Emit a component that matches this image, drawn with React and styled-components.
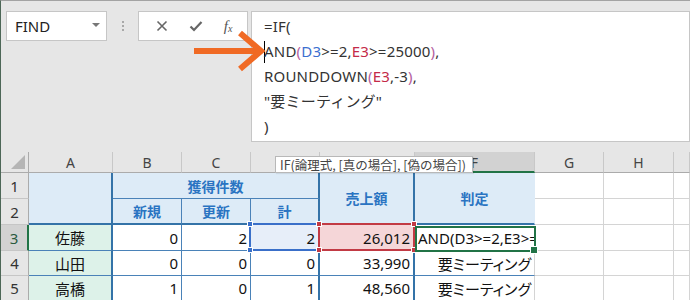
import React from "react";
import styled, { createGlobalStyle } from "styled-components";

const FONT = `"Noto Sans", "Noto Sans CJK JP", sans-serif`;
const JP = `"Noto Sans CJK JP", "Noto Sans", sans-serif`;
const BLUE = "#3473a8";
const THIN = "#4a82b8";
const GRID = "#d4d4d4";

const Global = createGlobalStyle`
  html, body { margin: 0; padding: 0; overflow: hidden; background: #e6e6e6; }
  * { box-sizing: border-box; }
`;

const Window = styled.div`
  position: relative;
  width: 690px;
  height: 300px;
  overflow: hidden;
  background: #e6e6e6;
  border-top: 1px solid #a3a3a3;
  border-left: 1px solid #4d6757;
  font-family: ${FONT};
`;

const FormulaBar = styled.div`
  display: flex;
  align-items: flex-start;
  height: 151px;
  padding: 10px 0 0 5px;
`;

const NameBox = styled.div`
  width: 101px;
  height: 30px;
  background: #fff;
  border: 1px solid #c6c6c6;
  display: flex;
  align-items: center;
  justify-content: space-between;
  padding: 0 6px 0 8px;
  font-size: 15px;
  color: #222;
`;

const DropTri = styled.span`
  width: 0;
  height: 0;
  border-left: 4px solid transparent;
  border-right: 4px solid transparent;
  border-top: 4px solid #777;
  margin-top: -3px;
`;

const Grip = styled.div`
  width: 31px;
  height: 30px;
  display: flex;
  flex-direction: column;
  align-items: center;
  justify-content: center;
  gap: 2px;
  & > span {
    width: 2px;
    height: 2px;
    background: #a8a8a8;
  }
`;

const FxBox = styled.div`
  width: 110px;
  height: 30px;
  background: #fff;
  border: 1px solid #c6c6c6;
  display: flex;
  align-items: center;
  justify-content: space-around;
  padding: 0 4px 0 6px;
  color: #666;
`;

const FxText = styled.span`
  font-family: "Liberation Serif", serif;
  font-style: italic;
  font-size: 15px;
  color: #555;
  & > sub {
    font-size: 10px;
    vertical-align: -1px;
  }
`;

const FormulaBox = styled.div`
  margin-left: 3px;
  flex: 1;
  height: 131px;
  background: #fff;
  border: 1px solid #c6c6c6;
  padding: 2px 12px;
  font-size: 15px;
  line-height: 25px;
  letter-spacing: 0.2px;
  color: #333;
  font-family: ${FONT};
`;

const Line = styled.div`
  white-space: nowrap;
`;

const Ref = styled.span`
  color: ${(p) => p.$c};
`;

const Caret = styled.span`
  display: inline-block;
  width: 1px;
  height: 22px;
  background: #000;
  vertical-align: -6px;
  margin-right: -1px;
`;

const Sheet = styled.div`
  display: grid;
  grid-template-columns: 28px 84px 69px 69px 69px 95px 120px 69px 70px 16px;
  grid-template-rows: 21px 26px 26px 26px 25px 25px;
  background: #fff;
`;

const Corner = styled.div`
  position: relative;
  background: #e6e6e6;
  border-right: 1px solid #ababab;
  border-bottom: 1px solid #ababab;
  &::after {
    content: "";
    position: absolute;
    right: 3px;
    bottom: 3px;
    width: 0;
    height: 0;
    border-left: 14px solid transparent;
    border-bottom: 14px solid #b5b5b5;
  }
`;

const ColHead = styled.div`
  background: ${(p) => (p.$sel ? "#d2d2d2" : "#e6e6e6")};
  border-right: 1px solid #c8c8c8;
  border-bottom: ${(p) => (p.$sel ? "2px solid #217346" : "1px solid #ababab")};
  display: flex;
  align-items: center;
  justify-content: center;
  font-size: 14px;
  color: #444;
  padding-top: 1px;
`;

const RowHead = styled.div`
  grid-column: 1;
  grid-row: ${(p) => p.$row};
  background: ${(p) => (p.$sel ? "#d2d2d2" : "#e6e6e6")};
  border-right: ${(p) => (p.$sel ? "2px solid #217346" : "1px solid #ababab")};
  border-bottom: 1px solid #c6c6c6;
  display: flex;
  align-items: center;
  justify-content: center;
  font-size: 15px;
  color: ${(p) => (p.$sel ? "#2a5a3e" : "#333")};
`;

const Cell = styled.div`
  position: relative;
  grid-column: ${(p) => p.$col || "auto"};
  grid-row: ${(p) => p.$row || "auto"};
  background: ${(p) => p.$bg || "#fff"};
  border-right: ${(p) => p.$br || `1px solid ${GRID}`};
  border-bottom: ${(p) => p.$bb || `1px solid ${GRID}`};
  display: flex;
  align-items: center;
  justify-content: ${(p) => p.$align || "flex-end"};
  padding: 0 3px;
  font-family: ${JP};
  font-feature-settings: "palt";
  font-size: ${(p) => (p.$head ? "14px" : "15px")};
  font-weight: ${(p) => (p.$head ? 700 : 400)};
  color: ${(p) => (p.$head ? "#2a74c2" : "#111")};
  white-space: nowrap;
  overflow: ${(p) => (p.$clip ? "hidden" : "visible")};
`;

const NumText = styled.span`
  font-family: ${FONT};
`;

const RefBox = styled.div`
  position: absolute;
  left: -2px;
  top: -2px;
  right: -2px;
  bottom: -1px;
  border: 2px solid ${(p) => p.$c};
  pointer-events: none;
  z-index: ${(p) => p.$z};
`;

const Handle = styled.span`
  position: absolute;
  width: 6px;
  height: 6px;
  background: ${(p) => p.$c};
  border: 1px solid #fff;
  ${(p) => (p.$v === "t" ? "top: -4px;" : "bottom: -4px;")}
  ${(p) => (p.$h === "l" ? "left: -4px;" : "right: -4px;")}
`;

const ActiveHost = styled.div`
  position: absolute;
  left: 414px;
  top: 225px;
  width: 121px;
  height: 26px;
  pointer-events: none;
  z-index: 4;
  border: 2px solid #217346;
  &::after {
    content: "";
    position: absolute;
    right: -4px;
    bottom: -4px;
    width: 6px;
    height: 6px;
    background: #217346;
    border: 1px solid #fff;
  }
`;

const Tooltip = styled.div`
  position: absolute;
  left: 274px;
  top: 155px;
  width: 198px;
  height: 17px;
  background: #fff;
  border: 1px solid #b8b8b8;
  box-shadow: 1px 1px 1px rgba(0, 0, 0, 0.08);
  font-family: ${JP};
  font-size: 12.5px;
  line-height: 15px;
  color: #444;
  padding: 0 4px;
  white-space: nowrap;
  overflow: hidden;
  z-index: 10;
`;

const ArrowSvg = styled.svg`
  position: absolute;
  left: 188px;
  top: 28px;
  z-index: 11;
`;

const thick = `2px solid ${BLUE}`;
const thin = `1px solid ${THIN}`;
const HEAD_BG = "#ddebf7";
const NAME_BG = "#ddf2e9";

function RefHighlight({ color, z }) {
  return (
    <RefBox $c={color} $z={z}>
      <Handle $c={color} $v="t" $h="l" />
      <Handle $c={color} $v="t" $h="r" />
      <Handle $c={color} $v="b" $h="l" />
      <Handle $c={color} $v="b" $h="r" />
    </RefBox>
  );
}

const rows = [
  { n: 4, name: "山田", b: 0, c: 0, d: 0, e: "33,990" },
  { n: 5, name: "高橋", b: 1, c: 0, d: 1, e: "48,560" },
];

const EmptyTail = () => (
  <>
    <Cell />
    <Cell />
    <Cell />
  </>
);

export default function App() {
  const P = "#b4609f";
  const B = "#3c6fd0";
  const R = "#c42a48";
  return (
    <>
      <Global />
      <Window>
        <FormulaBar>
          <NameBox>
            FIND
            <DropTri />
          </NameBox>
          <Grip>
            <span />
            <span />
            <span />
          </Grip>
          <FxBox>
            <svg width="12" height="12" viewBox="0 0 12 12">
              <path d="M1.5 1.5 L10.5 10.5 M10.5 1.5 L1.5 10.5" stroke="#666" strokeWidth="1.6" fill="none" />
            </svg>
            <svg width="14" height="12" viewBox="0 0 14 12">
              <path d="M1.5 6.5 L5 10 L12.5 2" stroke="#666" strokeWidth="2.2" fill="none" />
            </svg>
            <FxText>
              f<sub>x</sub>
            </FxText>
          </FxBox>
          <FormulaBox>
            <Line>=IF(</Line>
            <Line>
              <Caret />
              AND<Ref $c={P}>(</Ref>
              <Ref $c={B}>D3</Ref>&gt;=2,<Ref $c={R}>E3</Ref>&gt;=25000<Ref $c={P}>)</Ref>,
            </Line>
            <Line>
              ROUNDDOWN<Ref $c={P}>(</Ref>
              <Ref $c={R}>E3</Ref>,-3<Ref $c={P}>)</Ref>,
            </Line>
            <Line>"要ミーティング"</Line>
            <Line>)</Line>
          </FormulaBox>
        </FormulaBar>

        <Sheet>
          <Corner />
          {["A", "B", "C", "D", "E", "F", "G", "H", ""].map((l, i) => (
            <ColHead key={i} $sel={l === "F"}>
              {l}
            </ColHead>
          ))}

          <RowHead $row={2}>1</RowHead>
          <Cell $col="2" $row="2 / span 2" $bg={HEAD_BG} $br={thick} $bb={thick} $head />
          <Cell $col="3 / span 3" $row="2" $bg={HEAD_BG} $br={thick} $bb={thin} $align="center" $head>
            獲得件数
          </Cell>
          <Cell $col="6" $row="2 / span 2" $bg={HEAD_BG} $br={thick} $bb={thick} $align="center" $head>
            売上額
          </Cell>
          <Cell $col="7" $row="2 / span 2" $bg={HEAD_BG} $br="1px solid transparent" $bb={thick} $align="center" $head>
            判定
          </Cell>
          <Cell $col="8" $row="2" />
          <Cell $col="9" $row="2" />
          <Cell $col="10" $row="2" />

          <RowHead $row={3}>2</RowHead>
          <Cell $col="3" $row="3" $bg={HEAD_BG} $br={thin} $bb={thick} $align="center" $head>
            新規
          </Cell>
          <Cell $col="4" $row="3" $bg={HEAD_BG} $br={thin} $bb={thick} $align="center" $head>
            更新
          </Cell>
          <Cell $col="5" $row="3" $bg={HEAD_BG} $br={thick} $bb={thick} $align="center" $head>
            計
          </Cell>
          <Cell $col="8" $row="3" />
          <Cell $col="9" $row="3" />
          <Cell $col="10" $row="3" />

          <RowHead $row={4} $sel>
            3
          </RowHead>
          <Cell $bg={NAME_BG} $br={thick} $bb={thin} $align="center">
            佐藤
          </Cell>
          <Cell $br={thin} $bb={thin}>
            <NumText>0</NumText>
          </Cell>
          <Cell $br={thin} $bb={thin}>
            <NumText>2</NumText>
          </Cell>
          <Cell $bg="#e7eef9" $br={thick} $bb={thin}>
            <NumText>2</NumText>
            <RefHighlight color="#3a6fc9" z={2} />
          </Cell>
          <Cell $bg="#f5d6d8" $br={thick} $bb={thin}>
            <NumText>26,012</NumText>
            <RefHighlight color="#c23a44" z={3} />
          </Cell>
          <Cell $br="1px solid transparent" $bb={thin} $align="flex-start" $clip>
            <NumText>AND(D3&gt;=2,E3&gt;=</NumText>
          </Cell>
          <EmptyTail />

          {rows.map((r) => (
            <React.Fragment key={r.n}>
              <RowHead $row={r.n + 1}>{r.n}</RowHead>
              <Cell $bg={NAME_BG} $br={thick} $bb={thin} $align="center">
                {r.name}
              </Cell>
              <Cell $br={thin} $bb={thin}>
                <NumText>{r.b}</NumText>
              </Cell>
              <Cell $br={thin} $bb={thin}>
                <NumText>{r.c}</NumText>
              </Cell>
              <Cell $br={thick} $bb={thin}>
                <NumText>{r.d}</NumText>
              </Cell>
              <Cell $br={thick} $bb={thin}>
                <NumText>{r.e}</NumText>
              </Cell>
              <Cell $bb={thin}>要ミーティング</Cell>
              <EmptyTail />
            </React.Fragment>
          ))}
        </Sheet>

        <ActiveHost />

        <Tooltip>IF(論理式, [真の場合], [偽の場合])</Tooltip>

        <ArrowSvg width="80" height="48" viewBox="0 0 80 48">
          <path d="M5 22 L70 22" stroke="#f06a24" strokeWidth="6" fill="none" />
          <path d="M51 4 L72 22 L51 40" stroke="#f06a24" strokeWidth="6" fill="none" strokeLinejoin="miter" />
        </ArrowSvg>
      </Window>
    </>
  );
}
